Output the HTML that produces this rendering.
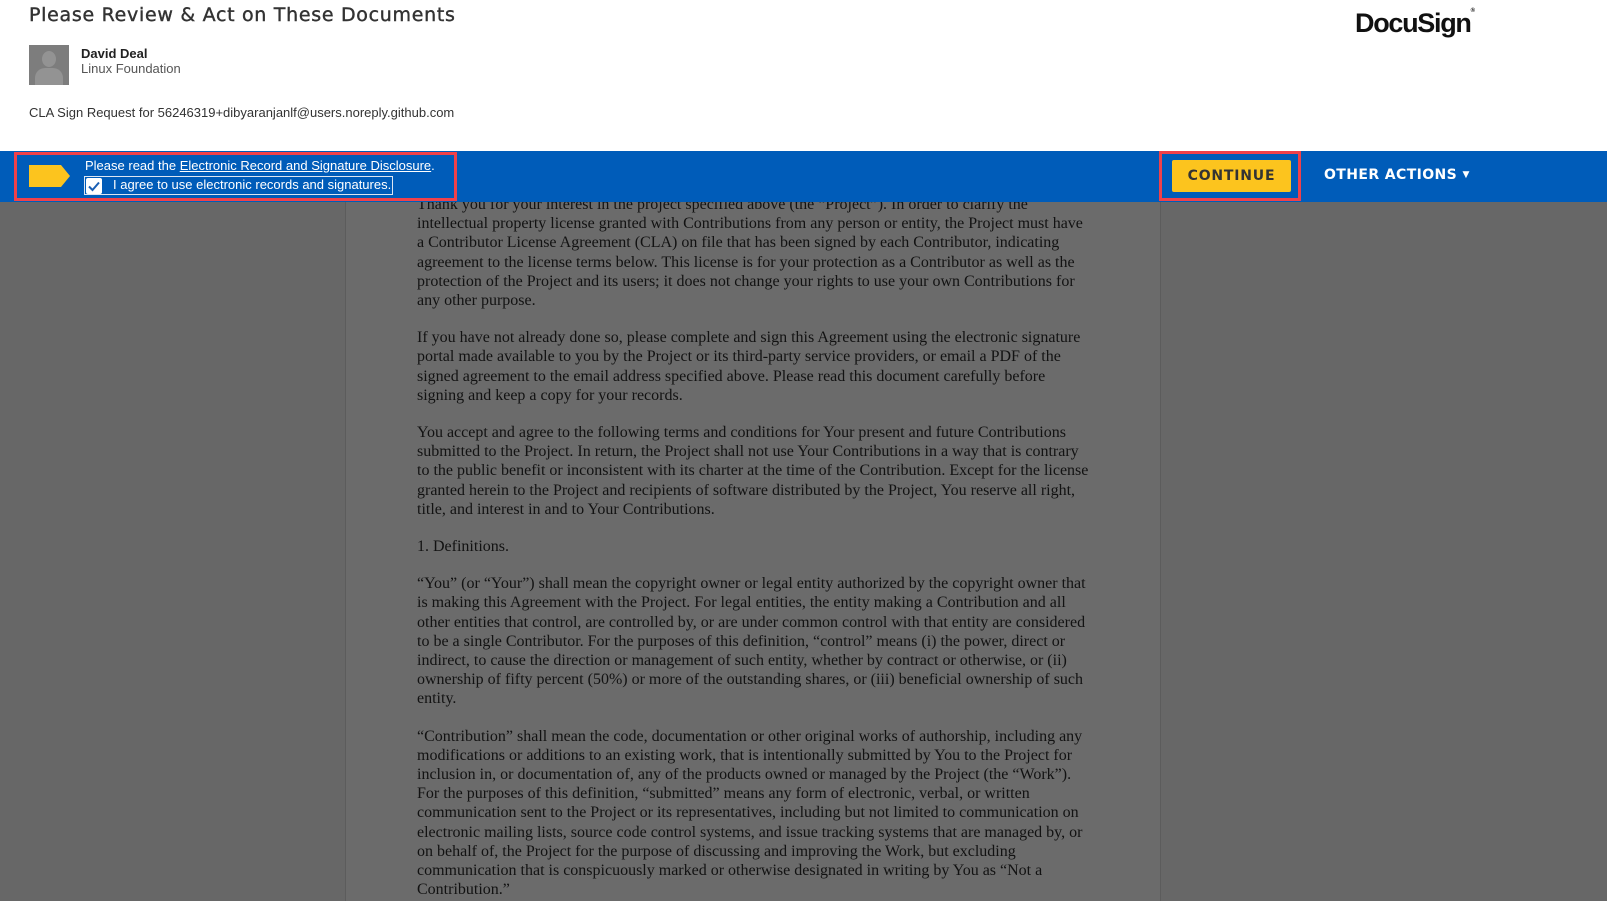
<!DOCTYPE html>
<html><head><meta charset="utf-8"><style>
*{margin:0;padding:0;box-sizing:border-box}
html,body{width:1607px;height:901px;overflow:hidden}
body{background:#fff;font-family:"Liberation Sans",sans-serif;position:relative}
.abs{position:absolute}
#gray{position:absolute;left:0;top:202px;width:1607px;height:699px;background:#676767}
#page{position:absolute;left:345px;top:202px;width:816px;height:699px;background:#6b6b6b;border-left:1px solid #5c5c5c;border-right:1px solid #5c5c5c}
#docwrap{position:absolute;left:0;top:0;width:1607px;height:901px;overflow:hidden}
#doc{position:absolute;left:417px;top:195px;font-family:"Liberation Serif",serif;font-size:16px;line-height:19.2px;color:#121212;white-space:nowrap}
#doc p{margin-bottom:18px}
#bar{position:absolute;left:0;top:151px;width:1607px;height:51px;background:#005cb9}
</style></head><body>
<div class="abs" style="left:29px;top:4px;font-size:19px;color:#333;letter-spacing:0.7px;font-family:'DejaVu Sans',sans-serif;-webkit-text-stroke:0.4px #333">Please Review &amp; Act on These Documents</div>
<div class="abs" style="left:1355px;top:8px;font-size:27px;font-weight:bold;color:#111;letter-spacing:-1.3px">DocuSign<span style="font-size:6px;vertical-align:top">®</span></div>
<div class="abs" style="left:29px;top:45px;width:40px;height:40px;background:#7d7d7d;overflow:hidden">
<div class="abs" style="left:13px;top:6px;width:14px;height:16px;border-radius:50%;background:#939393"></div>
<div class="abs" style="left:6px;top:23px;width:28px;height:22px;border-radius:10px 10px 0 0;background:#939393"></div></div>
<div class="abs" style="left:81px;top:46px;font-size:13px;font-weight:bold;color:#222">David Deal</div>
<div class="abs" style="left:81px;top:61px;font-size:13px;color:#555">Linux Foundation</div>
<div class="abs" style="left:29px;top:105px;font-size:13px;color:#333">CLA Sign Request for 56246319+dibyaranjanlf@users.noreply.github.com</div>
<div id="gray"></div>
<div id="page"></div>
<div id="docwrap"><div id="doc">
<p>Thank you for your interest in the project specified above (the “Project”). In order to clarify the<br>intellectual property license granted with Contributions from any person or entity, the Project must have<br>a Contributor License Agreement (CLA) on file that has been signed by each Contributor, indicating<br>agreement to the license terms below. This license is for your protection as a Contributor as well as the<br>protection of the Project and its users; it does not change your rights to use your own Contributions for<br>any other purpose.</p>
<p>If you have not already done so, please complete and sign this Agreement using the electronic signature<br>portal made available to you by the Project or its third-party service providers, or email a PDF of the<br>signed agreement to the email address specified above. Please read this document carefully before<br>signing and keep a copy for your records.</p>
<p>You accept and agree to the following terms and conditions for Your present and future Contributions<br>submitted to the Project. In return, the Project shall not use Your Contributions in a way that is contrary<br>to the public benefit or inconsistent with its charter at the time of the Contribution. Except for the license<br>granted herein to the Project and recipients of software distributed by the Project, You reserve all right,<br>title, and interest in and to Your Contributions.</p>
<p>1. Definitions.</p>
<p>“You” (or “Your”) shall mean the copyright owner or legal entity authorized by the copyright owner that<br>is making this Agreement with the Project. For legal entities, the entity making a Contribution and all<br>other entities that control, are controlled by, or are under common control with that entity are considered<br>to be a single Contributor. For the purposes of this definition, “control” means (i) the power, direct or<br>indirect, to cause the direction or management of such entity, whether by contract or otherwise, or (ii)<br>ownership of fifty percent (50%) or more of the outstanding shares, or (iii) beneficial ownership of such<br>entity.</p>
<p>“Contribution” shall mean the code, documentation or other original works of authorship, including any<br>modifications or additions to an existing work, that is intentionally submitted by You to the Project for<br>inclusion in, or documentation of, any of the products owned or managed by the Project (the “Work”).<br>For the purposes of this definition, “submitted” means any form of electronic, verbal, or written<br>communication sent to the Project or its representatives, including but not limited to communication on<br>electronic mailing lists, source code control systems, and issue tracking systems that are managed by, or<br>on behalf of, the Project for the purpose of discussing and improving the Work, but excluding<br>communication that is conspicuously marked or otherwise designated in writing by You as “Not a<br>Contribution.”</p>
</div></div>
<div id="bar"></div>
<div class="abs" style="left:14px;top:152px;width:443px;height:49px;border:3px solid #f0414a"></div>
<svg class="abs" style="left:29px;top:165px" width="42" height="22"><polygon points="0,0 32,0 41,11 32,22 0,22" fill="#fcc41e"/></svg>
<div class="abs" style="left:85px;top:158px;font-size:13px;color:#fff">Please read the <u>Electronic Record and Signature Disclosure</u>.</div>
<div class="abs" style="left:84px;top:176px;width:309px;height:19px;border:1px solid #dde6f2"></div>
<div class="abs" style="left:86px;top:178px;width:16px;height:16px;background:#fff;border-radius:2px"><svg width="16" height="16"><path d="M3 8.5 L6.5 12 L13 4.5" stroke="#1a5fb4" stroke-width="2" fill="none"/></svg></div>
<div class="abs" style="left:113px;top:177px;font-size:13px;color:#fff">I agree to use electronic records and signatures.</div>
<div class="abs" style="left:1159px;top:151px;width:142px;height:50px;border:3px solid #f0414a"></div>
<div class="abs" style="left:1172px;top:160px;width:119px;height:32px;background:#fcc41e;border-radius:2px;color:#333;font-size:14px;font-weight:bold;letter-spacing:0.8px;text-align:center;line-height:32px;font-family:'DejaVu Sans',sans-serif">CONTINUE</div>
<div class="abs" style="left:1324px;top:167px;font-size:14px;font-weight:bold;color:#fff;letter-spacing:0.4px;font-family:'DejaVu Sans',sans-serif">OTHER ACTIONS <span style="font-size:9px;vertical-align:2px">▼</span></div>
</body></html>
